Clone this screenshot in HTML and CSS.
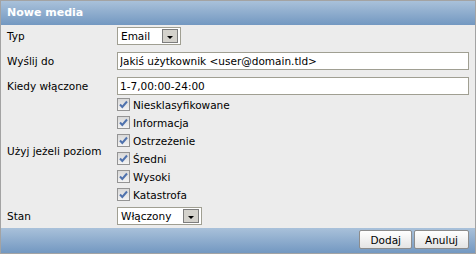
FILE: index.html
```html
<!DOCTYPE html>
<html lang="pl">
<head>
  <meta charset="UTF-8" />
  <title>Nowe media</title>
  <link rel="stylesheet" href="styles.css">
</head>
<body>
  <div class="dialog">
    <div class="dialog-title">Nowe media</div>

    <div class="form">
      <div class="label">Typ</div>
      <div class="field">
        <div class="select select-type">
          <span class="select-value">Email</span>
          <span class="select-arrow"></span>
        </div>
      </div>

      <div class="label">Wyślij do</div>
      <div class="field">
        <input class="text" type="text" value="Jakiś użytkownik &lt;user@domain.tld&gt;">
      </div>

      <div class="label">Kiedy włączone</div>
      <div class="field">
        <input class="text" type="text" value="1-7,00:00-24:00">
      </div>

      <div class="label">Użyj jeżeli poziom</div>
      <div class="field checks">
        <label class="check"><span class="box"><svg width="11" height="11" viewBox="0 0 11 11"><path d="M2 5.5 L4.3 8 L9 2.5" /></svg></span>Niesklasyfikowane</label>
        <label class="check"><span class="box"><svg width="11" height="11" viewBox="0 0 11 11"><path d="M2 5.5 L4.3 8 L9 2.5" /></svg></span>Informacja</label>
        <label class="check"><span class="box"><svg width="11" height="11" viewBox="0 0 11 11"><path d="M2 5.5 L4.3 8 L9 2.5" /></svg></span>Ostrzeżenie</label>
        <label class="check"><span class="box"><svg width="11" height="11" viewBox="0 0 11 11"><path d="M2 5.5 L4.3 8 L9 2.5" /></svg></span>Średni</label>
        <label class="check"><span class="box"><svg width="11" height="11" viewBox="0 0 11 11"><path d="M2 5.5 L4.3 8 L9 2.5" /></svg></span>Wysoki</label>
        <label class="check"><span class="box"><svg width="11" height="11" viewBox="0 0 11 11"><path d="M2 5.5 L4.3 8 L9 2.5" /></svg></span>Katastrofa</label>
      </div>

      <div class="label">Stan</div>
      <div class="field">
        <div class="select select-state">
          <span class="select-value">Włączony</span>
          <span class="select-arrow"></span>
        </div>
      </div>
    </div>

    <div class="dialog-footer">
      <button>Dodaj</button>
      <button>Anuluj</button>
    </div>
  </div>
</body>
</html>
```

FILE: styles.css
```css
:root {
  --bg: #ececec;
  --border: #a09f92;
  --text: #000;
}

* {
  margin: 0;
  padding: 0;
  box-sizing: border-box;
}

body {
  background: #fff;
  font-family: 'DejaVu Sans', Verdana, sans-serif;
  font-size: 10.5px;
  color: var(--text);
}

.dialog {
  width: 476px;
  height: 254px;
  border: 1px solid #a3a3a3;
  background: var(--bg);
  display: flex;
  flex-direction: column;
}

.dialog-title {
  height: 24px;
  padding: 0 6px;
  line-height: 24px;
  font-size: 11px;
  font-weight: bold;
  color: #fff;
  background: linear-gradient(#a9c1da, #7398c1);
}

.form {
  flex: 1;
  display: grid;
  grid-template-columns: 110px 1fr;
  row-gap: 7px;
  padding: 2px 6px 0;
  align-content: start;
}

.label {
  align-self: center;
}

.text {
  display: block;
  width: 352px;
  height: 18px;
  padding: 0 2px;
  border: 1px solid var(--border);
  background: #fff;
  font: inherit;
  color: var(--text);
}

.select {
  display: flex;
  align-items: center;
  height: 18px;
  padding: 0 2px 0 3px;
  border: 1px solid var(--border);
  background: #fff;
}

.select-type {
  width: 64px;
}

.select-state {
  width: 85px;
}

.select-value {
  flex: 1;
}

.select-arrow {
  width: 16px;
  height: 14px;
  border: 1px solid #7d7d7d;
  background: #d4d2cc;
  position: relative;
}

.select-arrow::after {
  content: '';
  position: absolute;
  left: 4px;
  top: 6px;
  border-left: 3px solid transparent;
  border-right: 3px solid transparent;
  border-top: 3px solid #000;
}

.checks {
  display: flex;
  flex-direction: column;
  margin: -7px 0 -3px;
}

.check {
  display: flex;
  align-items: flex-end;
  height: 18px;
  padding-bottom: 2px;
}

.box {
  width: 13px;
  height: 13px;
  margin-right: 3px;
  border: 1px solid #949494;
  background: linear-gradient(#d9d9d9, #f3f3f3);
  display: flex;
  align-items: center;
  justify-content: center;
}

.box svg path {
  fill: none;
  stroke: #4f72ad;
  stroke-width: 2;
}

.dialog-footer {
  flex-shrink: 0;
  height: 25px;
  padding: 2px 6px 0;
  display: flex;
  justify-content: flex-end;
  align-items: flex-start;
  gap: 2px;
  background: linear-gradient(#a9c1da, #7398c1);
}

.dialog-footer button {
  height: 19px;
  padding: 0 10px;
  border: 1px solid #8c8c8c;
  border-radius: 2px;
  background: linear-gradient(#ffffff, #e4e4e4);
  font: inherit;
  color: var(--text);
}
```
